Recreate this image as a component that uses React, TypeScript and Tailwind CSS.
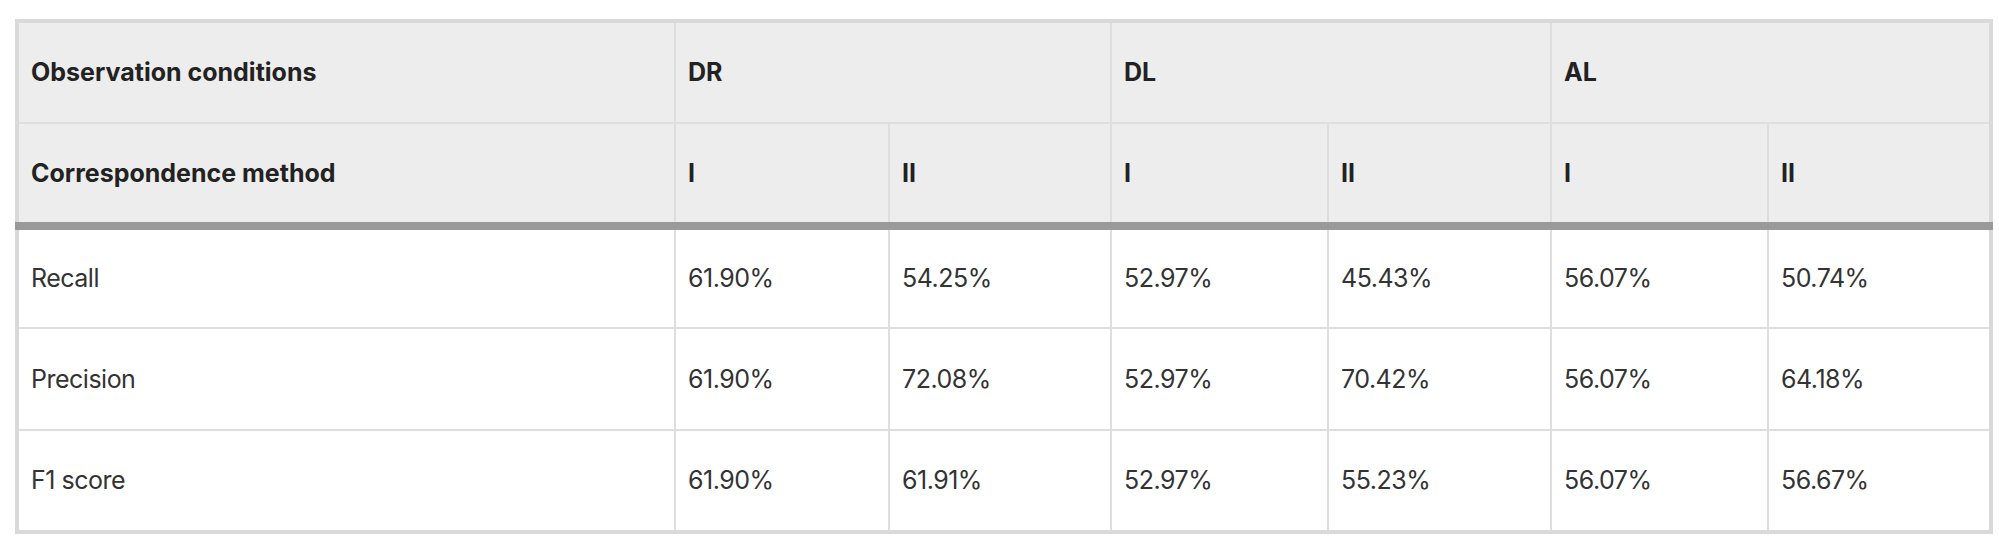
const rows = [
	{ label: 'Recall', values: ['61.90%', '54.25%', '52.97%', '45.43%', '56.07%', '50.74%'] },
	{ label: 'Precision', values: ['61.90%', '72.08%', '52.97%', '70.42%', '56.07%', '64.18%'] },
	{ label: 'F1 score', values: ['61.90%', '61.91%', '52.97%', '55.23%', '56.07%', '56.67%'] },
]

const groups = ['DR', 'DL', 'AL']
const methods = ['I', 'II', 'I', 'II', 'I', 'II']

export default function App() {
	return (
		<div
			className="min-h-screen bg-white pl-[15px] pr-[10px] pt-[19px] pb-[23px]"
			style={{ fontFamily: 'Inter, "Noto Sans", "Liberation Sans", sans-serif' }}
		>
			<table className="w-[1974px] table-fixed border-collapse border-4 border-[#d9d9d9] text-[25px] leading-none">
				<colgroup>
					<col className="w-[658px]" />
					<col className="w-[214px]" />
					<col className="w-[222px]" />
					<col className="w-[217px]" />
					<col className="w-[223px]" />
					<col className="w-[217px]" />
					<col className="w-[223px]" />
				</colgroup>
				<thead className="bg-[#ededed] text-[#222222]">
					<tr className="h-[102px]">
						<th className="border-2 border-[#dedede] px-3 text-left align-middle font-bold">
							Observation conditions
						</th>
						{groups.map((g) => (
							<th key={g} colSpan={2} className="border-2 border-[#dedede] px-3 text-left align-middle font-bold">
								{g}
							</th>
						))}
					</tr>
					<tr className="h-[103px]">
						<th className="border-2 border-b-8 border-[#dedede] border-b-[#999999] px-3 text-left align-middle font-bold">
							Correspondence method
						</th>
						{methods.map((m, i) => (
							<th key={i} className="border-2 border-b-8 border-[#dedede] border-b-[#999999] px-3 text-left align-middle font-bold">
								{m}
							</th>
						))}
					</tr>
				</thead>
				<tbody className="bg-white text-[#333333] tracking-[-0.5px]">
					{rows.map((row) => (
						<tr key={row.label} className="h-[102px]">
							<td className="border-2 border-[#dedede] px-3 align-middle">{row.label}</td>
							{row.values.map((v, i) => (
								<td key={i} className="border-2 border-[#dedede] px-3 align-middle">
									{v}
								</td>
							))}
						</tr>
					))}
				</tbody>
			</table>
		</div>
	)
}
